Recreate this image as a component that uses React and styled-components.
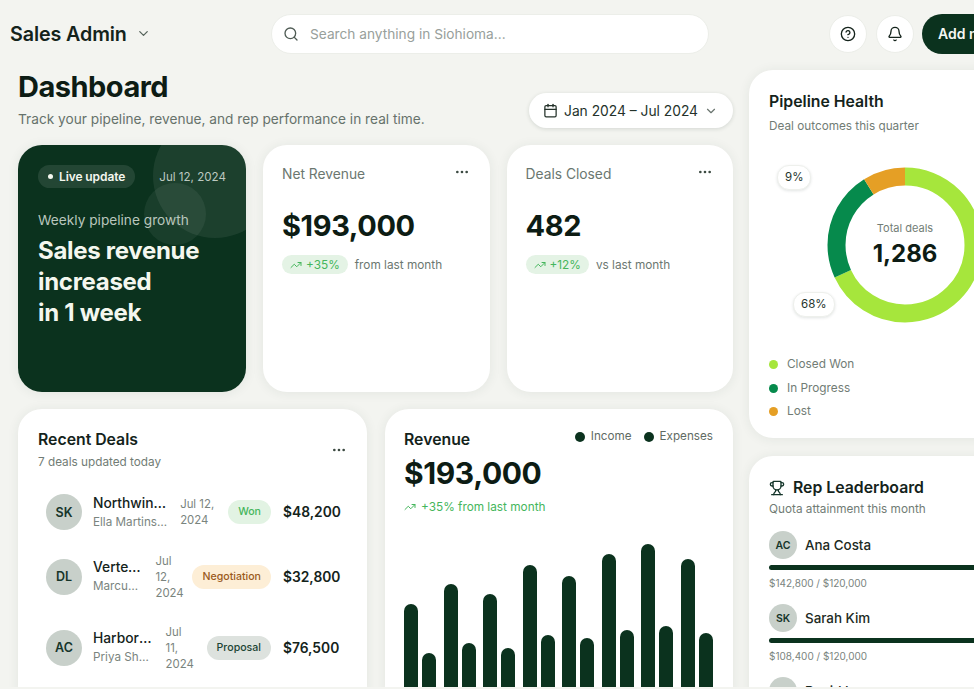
import React from "react";
import styled, { createGlobalStyle } from "styled-components";
import { ChevronDown, Search, CircleHelp, Bell, Calendar, TrendingUp, Ellipsis, Trophy } from "lucide-react";

const Global = createGlobalStyle`
  html, body { margin: 0; padding: 0; background: #f3f4f0; }
  body { font-family: Inter, "Liberation Sans", sans-serif; color: #0f1f17; overflow: hidden; }
  * { box-sizing: border-box; }
`;

const Page = styled.div`
  width: 974px;
  height: 687px;
  overflow: hidden;
  background: #f3f4f0;
`;

const Header = styled.header`
  display: flex;
  align-items: center;
  height: 67px;
  padding: 0 0 0 10px;
`;

const Brand = styled.div`
  width: 261px;
  flex: none;
  display: flex;
  align-items: center;
  gap: 9px;
  font-size: 19.7px;
  font-weight: 600;
  letter-spacing: -0.1px;
  color: #14231b;
  svg { color: #55635b; }
`;

const SearchBox = styled.div`
  width: 438px;
  height: 40px;
  flex: none;
  display: flex;
  align-items: center;
  gap: 11px;
  padding: 0 11px;
  background: #fff;
  border: 1px solid #eceee9;
  border-radius: 20px;
  font-size: 13.7px;
  color: #98a09b;
  svg { color: #4f5b54; }
`;

const HeaderActions = styled.div`
  display: flex;
  align-items: center;
  gap: 8.5px;
  margin-left: 120px;
  flex: none;
`;

const RoundButton = styled.button`
  width: 38px;
  height: 38px;
  padding: 0;
  display: grid;
  place-items: center;
  background: #fff;
  border: 1px solid #eceee9;
  border-radius: 50%;
  color: #14231b;
`;

const AddButton = styled.button`
  width: 120px;
  height: 40px;
  padding: 0 0 0 16px;
  text-align: left;
  background: #0b321e;
  border: 0;
  border-radius: 20px;
  color: #f4f7f2;
  font: 600 14px Inter, sans-serif;
  white-space: nowrap;
`;

const Body = styled.div`
  display: flex;
  gap: 16px;
  padding-left: 18px;
  width: 1100px;
`;

const Main = styled.main`
  width: 715px;
  flex: none;
`;

const TitleRow = styled.div`
  display: flex;
  justify-content: space-between;
  align-items: flex-start;
  height: 78px;
`;

const Title = styled.h1`
  margin: 2px 0 0;
  font-size: 29px;
  line-height: 36px;
  font-weight: 700;
  letter-spacing: -0.5px;
  color: #0d1c14;
`;

const Subtitle = styled.p`
  margin: 4px 0 0;
  font-size: 13.7px;
  line-height: 20px;
  color: #66726b;
`;

const DatePill = styled.div`
  display: flex;
  align-items: center;
  width: 204px;
  height: 35px;
  margin-top: 26px;
  padding: 0 14px;
  gap: 6px;
  background: #fff;
  border-radius: 18px;
  box-shadow: 0 1px 4px rgba(20, 40, 30, 0.14);
  font-size: 13.8px;
  color: #24322a;
  white-space: nowrap;
  svg { flex: none; }
  svg:last-child { color: #6a756f; }
`;

const TopCards = styled.div`
  display: grid;
  grid-template-columns: 228px 226.5px 226.5px;
  gap: 17px;
  height: 247px;
`;

const Card = styled.section`
  position: relative;
  background: #fff;
  border-radius: 24px;
  box-shadow: 0 1px 12px rgba(40, 60, 45, 0.08);
`;

const Hero = styled(Card)`
  background: #0b321e;
  padding: 20px;
  overflow: hidden;
  color: #f4f7ef;
`;

const Bubble = styled.span`
  position: absolute;
  border-radius: 50%;
  background: rgba(255, 255, 255, ${(p) => p.$alpha});
  left: ${(p) => p.$x}px;
  top: ${(p) => p.$y}px;
  width: ${(p) => p.$size}px;
  height: ${(p) => p.$size}px;
`;

const HeroTop = styled.div`
  position: relative;
  display: flex;
  justify-content: space-between;
  align-items: center;
`;

const LiveTag = styled.span`
  display: flex;
  align-items: center;
  gap: 6px;
  height: 23px;
  padding: 0 10px 0 10px;
  background: rgba(255, 255, 255, 0.1);
  border-radius: 12px;
  font-size: 12px;
  font-weight: 600;
  letter-spacing: -0.1px;
  &::before {
    content: "";
    width: 5px;
    height: 5px;
    border-radius: 50%;
    background: #f4f7ef;
  }
`;

const HeroDate = styled.span`
  font-size: 11.6px;
  color: #bcc9c0;
`;

const HeroLabel = styled.div`
  position: relative;
  margin-top: 22px;
  font-size: 13.7px;
  line-height: 20px;
  color: #b9c6bd;
`;

const HeroText = styled.div`
  position: relative;
  margin-top: 5px;
  font-size: 24px;
  line-height: 31px;
  font-weight: 700;
  letter-spacing: -0.3px;
`;

const StatCard = styled(Card)`
  padding: 19px 20px 19px 19px;
`;

const StatHead = styled.div`
  display: flex;
  justify-content: space-between;
  align-items: flex-start;
  font-size: 13.8px;
  line-height: 20px;
  color: #6b7770;
  svg { color: #3c4a42; }
`;

const StatValue = styled.div`
  margin-top: 23px;
  font-size: 29px;
  line-height: 38px;
  font-weight: 700;
  letter-spacing: -0.4px;
  color: #0d1c14;
`;

const StatFoot = styled.div`
  display: flex;
  align-items: center;
  gap: 7px;
  margin-top: 10px;
  font-size: 11.8px;
  color: #6b7770;
`;

const Delta = styled.span`
  display: flex;
  align-items: center;
  gap: 4px;
  height: 19px;
  padding: 0 8px;
  border-radius: 10px;
  background: #e4f3e5;
  color: #45b65c;
  font-size: 11.8px;
`;

const BottomCards = styled.div`
  display: grid;
  grid-template-columns: 349px 348px;
  gap: 18px;
  margin-top: 17px;
  height: 300px;
`;

const DealsCard = styled(Card)`
  padding: 20px 20px;
`;

const DealsHead = styled.div`
  display: flex;
  justify-content: space-between;
  align-items: center;
  svg { color: #3c4a42; }
`;

const CardTitle = styled.h2`
  margin: 0;
  font-size: 15.8px;
  line-height: 21px;
  font-weight: 600;
  color: #14231b;
`;

const CardSub = styled.div`
  margin-top: 3px;
  font-size: 11.75px;
  line-height: 18px;
  color: #717c75;
`;

const DealList = styled.div`
  margin-top: 12px;
  padding: 0 7px 0 8px;
`;

const DealRow = styled.div`
  display: flex;
  align-items: center;
  gap: 8px;
  height: ${(p) => p.$tall ? 71 : 58}px;
`;

const Avatar = styled.div`
  flex: none;
  width: ${(p) => p.$size}px;
  height: ${(p) => p.$size}px;
  display: grid;
  place-items: center;
  border-radius: 50%;
  background: #c8d0ca;
  color: #16352a;
  font-size: ${(p) => p.$size > 30 ? 12.5 : 10.5}px;
  font-weight: 600;
`;

const DealInfo = styled.div`
  flex: 1 1 0;
  min-width: 0;
  margin: 0 4px 0 3px;
`;

const DealName = styled.div`
  font-size: 13.8px;
  line-height: 19px;
  font-weight: 500;
  color: #14231b;
  white-space: nowrap;
  overflow: hidden;
  text-overflow: ellipsis;
`;

const DealPerson = styled.div`
  margin-top: 1px;
  font-size: 11.7px;
  line-height: 17px;
  color: #7a847e;
  white-space: nowrap;
  overflow: hidden;
  text-overflow: ellipsis;
`;

const DealDate = styled.div`
  flex: none;
  width: ${(p) => p.$w}px;
  font-size: 11.4px;
  line-height: 16px;
  color: #7a847e;
  white-space: pre-line;
`;

const Status = styled.span`
  flex: none;
  height: 24px;
  line-height: 24px;
  padding: 0 10px;
  border-radius: 12px;
  font-size: 10.6px;
  font-weight: 500;
  background: ${(p) => p.$bg};
  color: ${(p) => p.$fg};
`;

const Amount = styled.div`
  flex: none;
  width: 57px;
  margin-left: 4px;
  font-size: 13.8px;
  font-weight: 600;
  color: #14231b;
`;

const RevenueCard = styled(Card)`
  padding: 20px 20px 0 19px;
  overflow: hidden;
`;

const Legend = styled.div`
  position: absolute;
  top: 19px;
  right: 20px;
  display: flex;
  gap: 12px;
  font-size: 11.7px;
  line-height: 17px;
  color: #5f6b64;
`;

const LegendItem = styled.span`
  display: flex;
  align-items: center;
  gap: 6px;
  &::before {
    content: "";
    width: 10px;
    height: 10px;
    border-radius: 50%;
    background: #0b321e;
  }
`;

const RevenueValue = styled.div`
  margin-top: 4px;
  font-size: 30px;
  line-height: 38px;
  font-weight: 700;
  letter-spacing: -0.4px;
  color: #0d1c14;
`;

const RevenueDelta = styled.div`
  display: flex;
  align-items: center;
  gap: 5px;
  margin-top: 6px;
  font-size: 11.8px;
  line-height: 18px;
  color: #45b65c;
`;

const Bars = styled.div`
  position: absolute;
  left: 19px;
  right: 20px;
  bottom: 0;
  top: 0;
  display: flex;
  align-items: flex-end;
  justify-content: space-between;
`;

const BarGroup = styled.div`
  display: flex;
  align-items: flex-end;
  gap: 4px;
`;

const Bar = styled.div`
  width: 14px;
  background: #0b321e;
  border-radius: 7px 7px 0 0;
`;

const Side = styled.aside`
  width: 312px;
  flex: none;
  margin-top: 3px;
  display: flex;
  flex-direction: column;
  gap: 18px;
`;

const HealthCard = styled(Card)`
  height: 368px;
  padding: 21px 20px;
  ${CardSub} { margin-top: 5px; }
`;

const DonutRow = styled.div`
  position: relative;
  height: 156px;
  margin-top: 32px;
  margin-left: 58px;
`;

const DonutCenter = styled.div`
  position: absolute;
  left: 0;
  width: 156px;
  top: 0;
  height: 156px;
  display: flex;
  flex-direction: column;
  align-items: center;
  justify-content: center;
`;

const DonutLabel = styled.div`
  font-size: 11px;
  line-height: 15px;
  margin-bottom: 3px;
  color: #727d76;
`;

const DonutValue = styled.div`
  font-size: 24px;
  line-height: 30px;
  font-weight: 700;
  color: #0d1c14;
`;

const Chip = styled.span`
  position: absolute;
  left: ${(p) => p.$x}px;
  top: ${(p) => p.$y}px;
  height: 25px;
  line-height: 23px;
  padding: 0 7px;
  background: #fff;
  border: 1px solid #eef0ec;
  border-radius: 12px;
  box-shadow: 0 1px 3px rgba(20, 40, 30, 0.12);
  font-size: 11.5px;
  color: #26342c;
`;

const HealthLegend = styled.div`
  margin-top: 33px;
  display: flex;
  flex-direction: column;
  gap: 6px;
`;

const HealthItem = styled.div`
  display: flex;
  align-items: center;
  gap: 9px;
  font-size: 11.8px;
  line-height: 17.5px;
  color: #717c75;
  &::before {
    content: "";
    width: 9px;
    height: 9px;
    border-radius: 50%;
    background: ${(p) => p.$color};
  }
`;

const LeaderCard = styled(Card)`
  height: 300px;
  padding: 21px 20px;
  ${CardSub} { margin-top: 2px; }
`;

const LeaderTitle = styled(CardTitle)`
  display: flex;
  align-items: center;
  gap: 8px;
  svg { color: #14352a; }
`;

const Rep = styled.div`
  margin-top: ${(p) => p.$first ? 13 : 14}px;
`;

const RepHead = styled.div`
  display: flex;
  align-items: center;
  gap: 8px;
  font-size: 13.4px;
  font-weight: 500;
  color: #1c2a22;
`;

const RepBar = styled.div`
  height: 5px;
  margin-top: 6px;
  border-radius: 3px;
  background: #0b321e;
`;

const RepFoot = styled.div`
  margin-top: 6px;
  font-size: 10px;
  line-height: 14px;
  color: #7a847e;
`;

const deals = [
  { i: "SK", name: "Northwind Traders", who: "Ella Martinsson", date: "Jul 12,\n2024", w: 40, status: "Won", bg: "#e2f3e3", fg: "#45b65c", amt: "$48,200" },
  { i: "DL", name: "Vertex Labs", who: "Marcus Lee", date: "Jul\n12,\n2024", w: 29, status: "Negotiation", bg: "#fdeed6", fg: "#9a5a1c", amt: "$32,800", tall: true },
  { i: "AC", name: "Harborview Systems", who: "Priya Sharma", date: "Jul\n11,\n2024", w: 33, status: "Proposal", bg: "#dde2de", fg: "#1c4534", amt: "$76,500", tall: true },
];

const bars = [[105, 56], [125, 66], [115, 61], [144, 74], [133, 71], [155, 79], [165, 83], [150, 76]];

const reps = [
  { i: "AC", name: "Ana Costa", foot: "$142,800 / $120,000" },
  { i: "SK", name: "Sarah Kim", foot: "$108,400 / $120,000" },
  { i: "DL", name: "David Lee", foot: "$96,200 / $120,000" },
];

function Donut() {
  // stroke segments: won, in progress, lost
  const r = 68.5;
  const c = 2 * Math.PI * r;
  const segs = [["#a6e63c", 0.68, 0], ["#068a4c", 0.23, 0.68], ["#e59f25", 0.09, 0.91]];
  return (
    <svg width="156" height="156" viewBox="0 0 156 156">
      <g transform="rotate(-90 78 78)">
        {segs.map(([color, len, start]) => (
          <circle key={color} cx="78" cy="78" r={r} fill="none" stroke={color} strokeWidth="18"
            strokeDasharray={`${len * c} ${c}`} strokeDashoffset={-start * c} />
        ))}
      </g>
    </svg>
  );
}

export default function App() {
  return (
    <Page>
      <Global />
      <Header>
        <Brand>Sales Admin <ChevronDown size={15} strokeWidth={2} /></Brand>
        <SearchBox><Search size={16} strokeWidth={2} /> Search anything in Siohioma...</SearchBox>
        <HeaderActions>
          <RoundButton><CircleHelp size={16} strokeWidth={2} /></RoundButton>
          <RoundButton><Bell size={16} strokeWidth={2} /></RoundButton>
          <AddButton>Add new deal</AddButton>
        </HeaderActions>
      </Header>
      <Body>
        <Main>
          <TitleRow>
            <div>
              <Title>Dashboard</Title>
              <Subtitle>Track your pipeline, revenue, and rep performance in real time.</Subtitle>
            </div>
            <DatePill><Calendar size={15} strokeWidth={2} /> Jan 2024 – Jul 2024 <ChevronDown size={14} strokeWidth={2} /></DatePill>
          </TitleRow>
          <TopCards>
            <Hero>
              <Bubble $alpha={0.07} $x={135} $y={-31} $size={124} />
              <Bubble $alpha={0.06} $x={126} $y={38} $size={62} />
              <HeroTop>
                <LiveTag>Live update</LiveTag>
                <HeroDate>Jul 12, 2024</HeroDate>
              </HeroTop>
              <HeroLabel>Weekly pipeline growth</HeroLabel>
              <HeroText>Sales revenue<br />increased<br />in 1 week</HeroText>
            </Hero>
            <StatCard>
              <StatHead>Net Revenue <Ellipsis size={16} strokeWidth={2} /></StatHead>
              <StatValue>$193,000</StatValue>
              <StatFoot>
                <Delta><TrendingUp size={12} strokeWidth={2} /> +35%</Delta> from last month
              </StatFoot>
            </StatCard>
            <StatCard>
              <StatHead>Deals Closed <Ellipsis size={16} strokeWidth={2} /></StatHead>
              <StatValue>482</StatValue>
              <StatFoot>
                <Delta><TrendingUp size={12} strokeWidth={2} /> +12%</Delta> vs last month
              </StatFoot>
            </StatCard>
          </TopCards>
          <BottomCards>
            <DealsCard>
              <DealsHead>
                <div>
                  <CardTitle>Recent Deals</CardTitle>
                  <CardSub>7 deals updated today</CardSub>
                </div>
                <Ellipsis size={16} strokeWidth={2} />
              </DealsHead>
              <DealList>
                {deals.map((d) => (
                  <DealRow key={d.name} $tall={d.tall}>
                    <Avatar $size={36}>{d.i}</Avatar>
                    <DealInfo>
                      <DealName>{d.name}</DealName>
                      <DealPerson>{d.who}</DealPerson>
                    </DealInfo>
                    <DealDate $w={d.w}>{d.date}</DealDate>
                    <Status $bg={d.bg} $fg={d.fg}>{d.status}</Status>
                    <Amount>{d.amt}</Amount>
                  </DealRow>
                ))}
              </DealList>
            </DealsCard>
            <RevenueCard>
              <Bars>
                {bars.map(([a, b], n) => (
                  <BarGroup key={n}>
                    <Bar style={{ height: a }} />
                    <Bar style={{ height: b }} />
                  </BarGroup>
                ))}
              </Bars>
              <Legend>
                <LegendItem>Income</LegendItem>
                <LegendItem>Expenses</LegendItem>
              </Legend>
              <CardTitle>Revenue</CardTitle>
              <RevenueValue>$193,000</RevenueValue>
              <RevenueDelta><TrendingUp size={12} strokeWidth={2} /> +35% from last month</RevenueDelta>
            </RevenueCard>
          </BottomCards>
        </Main>
        <Side>
          <HealthCard>
            <CardTitle>Pipeline Health</CardTitle>
            <CardSub>Deal outcomes this quarter</CardSub>
            <DonutRow>
              <Donut />
              <DonutCenter>
                <DonutLabel>Total deals</DonutLabel>
                <DonutValue>1,286</DonutValue>
              </DonutCenter>
              <Chip $x={-50} $y={-2}>9%</Chip>
              <Chip $x={-34} $y={125}>68%</Chip>
            </DonutRow>
            <HealthLegend>
              <HealthItem $color="#a6e63c">Closed Won</HealthItem>
              <HealthItem $color="#068a4c">In Progress</HealthItem>
              <HealthItem $color="#e59f25">Lost</HealthItem>
            </HealthLegend>
          </HealthCard>
          <LeaderCard>
            <LeaderTitle><Trophy size={16} strokeWidth={2} /> Rep Leaderboard</LeaderTitle>
            <CardSub>Quota attainment this month</CardSub>
            {reps.map((r, n) => (
              <Rep key={r.name} $first={n === 0}>
                <RepHead><Avatar $size={28}>{r.i}</Avatar> {r.name}</RepHead>
                <RepBar />
                <RepFoot>{r.foot}</RepFoot>
              </Rep>
            ))}
          </LeaderCard>
        </Side>
      </Body>
    </Page>
  );
}
